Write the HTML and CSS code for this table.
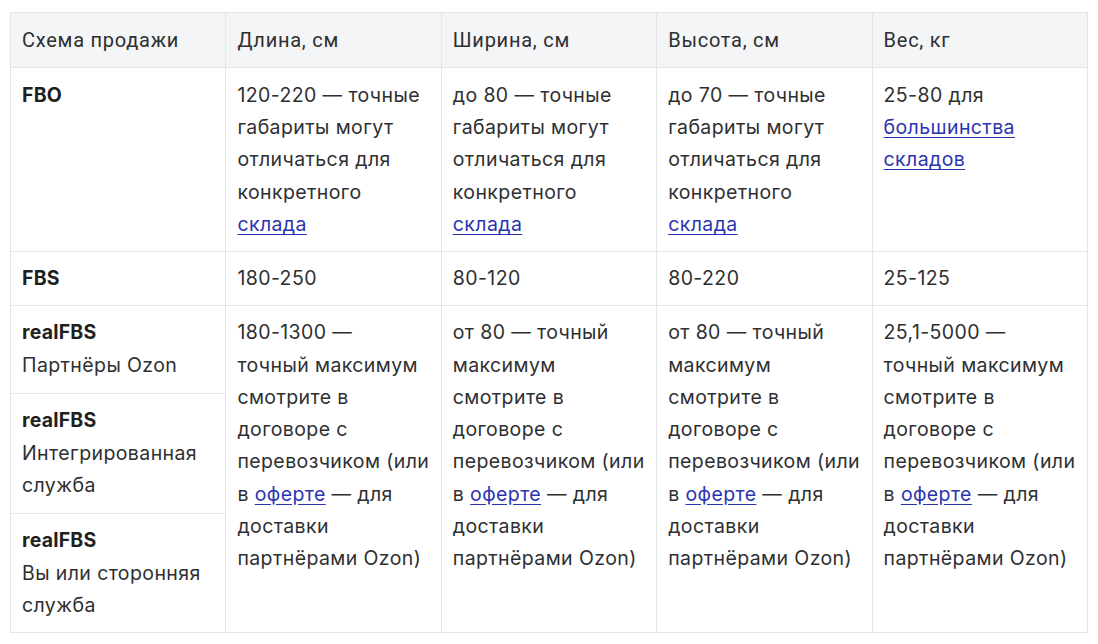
FILE: index.html
```html
<!DOCTYPE html>
<html lang="ru">
<head>
<meta charset="utf-8">
<link rel="stylesheet" href="styles.css">
</head>
<body>
<div class="wrap">
<table class="tbl">
  <colgroup><col><col><col><col><col></colgroup>
  <thead>
    <tr>
      <th>Схема продажи</th>
      <th>Длина, см</th>
      <th>Ширина, см</th>
      <th>Высота, см</th>
      <th>Вес, кг</th>
    </tr>
  </thead>
  <tbody>
    <tr class="r-fbo">
      <td><b>FBO</b></td>
      <td>120-220 — точные габариты могут отличаться для конкретного <a href="#">склада</a></td>
      <td>до 80 — точные габариты могут отличаться для конкретного <a href="#">склада</a></td>
      <td>до 70 — точные габариты могут отличаться для конкретного <a href="#">склада</a></td>
      <td>25-80 для <a href="#">большинства складов</a></td>
    </tr>
    <tr class="r-fbs">
      <td><b>FBS</b></td>
      <td>180-250</td>
      <td>80-120</td>
      <td>80-220</td>
      <td>25-125</td>
    </tr>
    <tr class="r-p">
      <td><b>realFBS</b><br>Партнёры Ozon</td>
      <td rowspan="3">180-1300 — точный максимум смотрите в договоре с перевозчиком (или в <a href="#">оферте</a> — для доставки партнёрами Ozon)</td>
      <td rowspan="3">от 80 — точный максимум смотрите в договоре с перевозчиком (или в <a href="#">оферте</a> — для доставки партнёрами Ozon)</td>
      <td rowspan="3">от 80 — точный максимум смотрите в договоре с перевозчиком (или в <a href="#">оферте</a> — для доставки партнёрами Ozon)</td>
      <td rowspan="3">25,1-5000 — точный максимум смотрите в договоре с перевозчиком (или в <a href="#">оферте</a> — для доставки партнёрами Ozon)</td>
    </tr>
    <tr class="r-i">
      <td><b>realFBS</b><br>Интегрированная служба</td>
    </tr>
    <tr class="r-y">
      <td><b>realFBS</b><br>Вы или сторонняя служба</td>
    </tr>
  </tbody>
</table>
</div>
</body>
</html>
```

FILE: styles.css
```css
html, body {
  margin: 0;
  padding: 0;
  background: #ffffff;
}
.wrap {
  padding: 12px 0 0 10px;
}
.tbl {
  width: 1078px;
  border-collapse: collapse;
  table-layout: fixed;
  font-family: Inter, "Noto Sans", sans-serif;
  font-size: 19.5px;
  letter-spacing: 0.4px;
  line-height: 32.25px;
  color: #2e2f31;
}
.tbl th, .tbl td {
  border: 1px solid #e4e6e8;
  padding: 10.5px 11px;
  text-align: left;
  vertical-align: top;
}
.tbl th {
  background: #f4f5f6;
  font-family: Roboto, "Liberation Sans", sans-serif;
  font-weight: 400;
  font-size: 20px;
  letter-spacing: 0.75px;
  padding-top: 11px;
  padding-bottom: 11px;
}
.tbl b {
  font-weight: 700;
  letter-spacing: 0.2px;
  color: #1e1f21;
}
.tbl a {
  color: #2b34b0;
  text-decoration: underline;
  text-underline-offset: 3px;
}
.r-p td { height: 66px; }
.r-i td { height: 98px; }
.r-y td { height: 97px; }
```
